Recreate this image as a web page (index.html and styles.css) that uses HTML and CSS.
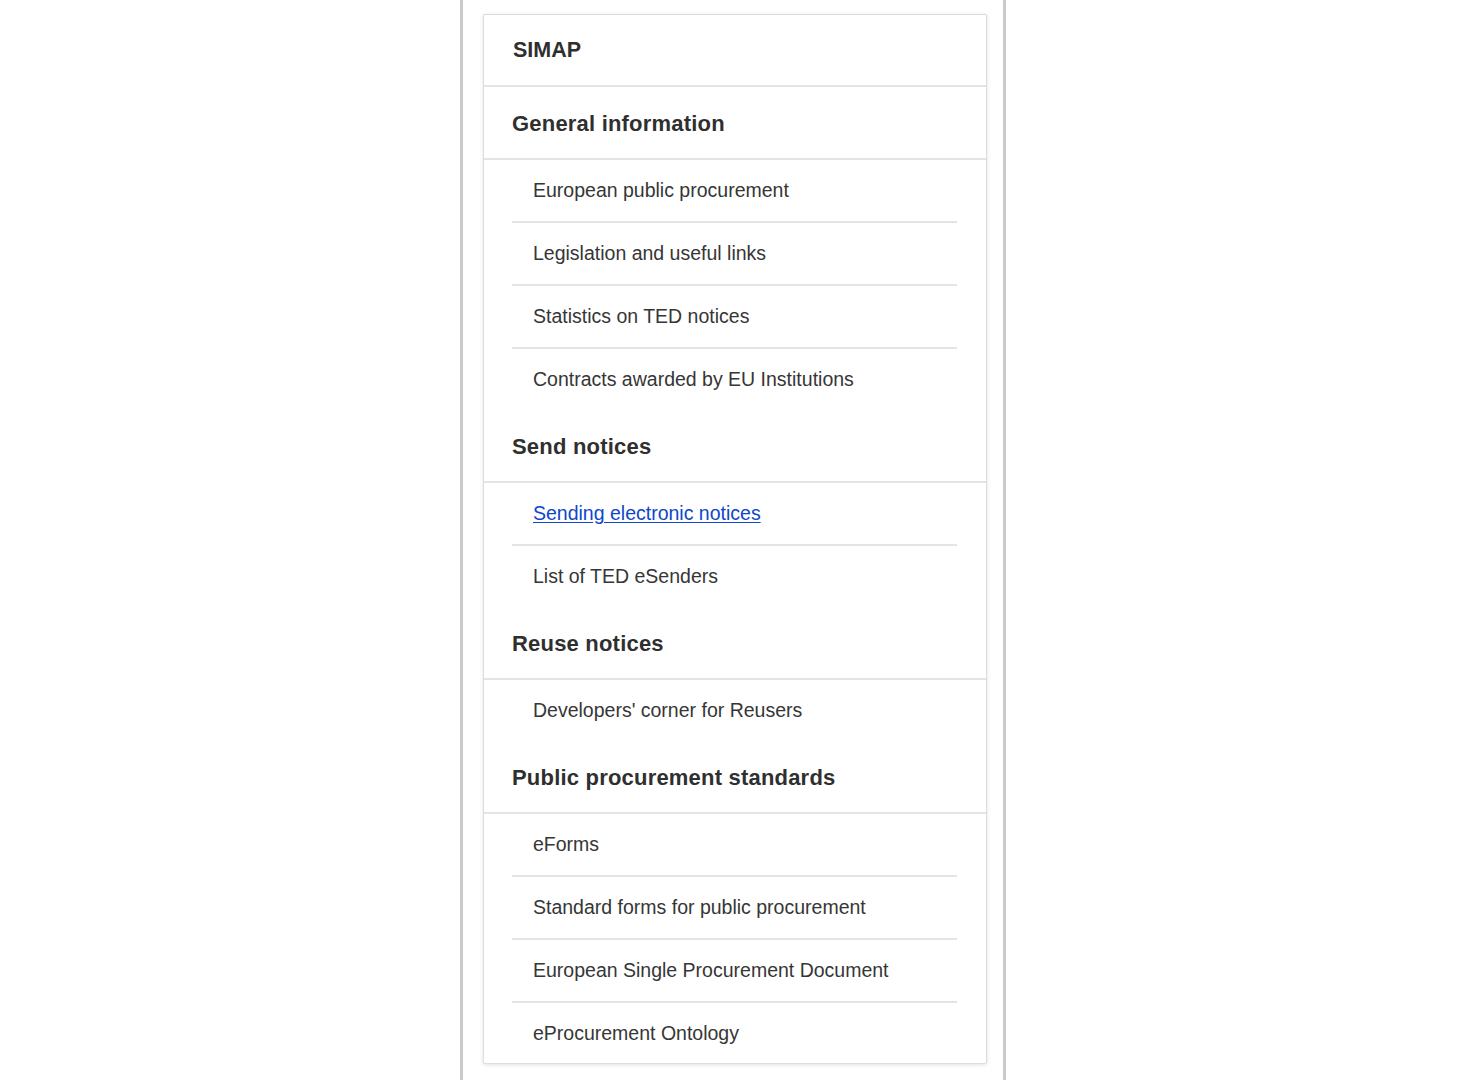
FILE: index.html
```html
<!DOCTYPE html>
<html lang="en">
<head>
<meta charset="utf-8">
<title>SIMAP</title>
<link rel="stylesheet" href="styles.css">
</head>
<body>
<div class="frame">
  <nav class="card">
    <div class="head head-top">SIMAP</div>
    <div class="head">General information</div>
    <ul class="items">
      <li class="item">European public procurement</li>
      <li class="item">Legislation and useful links</li>
      <li class="item">Statistics on TED notices</li>
      <li class="item">Contracts awarded by EU Institutions</li>
    </ul>
    <div class="head">Send notices</div>
    <ul class="items">
      <li class="item"><a class="link" href="#">Sending electronic notices</a></li>
      <li class="item">List of TED eSenders</li>
    </ul>
    <div class="head">Reuse notices</div>
    <ul class="items">
      <li class="item">Developers' corner for Reusers</li>
    </ul>
    <div class="head">Public procurement standards</div>
    <ul class="items items-last">
      <li class="item">eForms</li>
      <li class="item">Standard forms for public procurement</li>
      <li class="item">European Single Procurement Document</li>
      <li class="item">eProcurement Ontology</li>
    </ul>
  </nav>
</div>
</body>
</html>
```
FILE: styles.css
```css
html, body {
  margin: 0;
  padding: 0;
  background: #ffffff;
}
body {
  font-family: "Liberation Sans", Arial, sans-serif;
  color: #333333;
  height: 1080px;
  overflow: hidden;
}
.frame {
  margin-left: 460px;
  width: 546px;
  height: 1080px;
  border-left: 3px solid #cacaca;
  border-right: 3px solid #cacaca;
  padding: 14px 16px 0 20px;
  box-sizing: border-box;
}
.card {
  width: 504px;
  box-sizing: border-box;
  border: 1px solid #dddddd;
  border-radius: 2px;
  box-shadow: 0 1px 4px rgba(0, 0, 0, 0.12);
  background: #fff;
}
.head {
  height: 73px;
  box-sizing: border-box;
  border-bottom: 2px solid #e4e4e4;
  display: flex;
  align-items: center;
  padding-left: 28px;
  padding-top: 2px;
  font-size: 22px;
  font-weight: bold;
  color: #2f2f2f;
  letter-spacing: 0.2px;
}
.head-top {
  height: 72px;
  padding-top: 0;
  padding-left: 29px;
  font-size: 21.5px;
  letter-spacing: 0;
}
.items {
  list-style: none;
  margin: 0;
  padding: 0 29px 0 28px;
}
.item {
  height: 63px;
  box-sizing: border-box;
  border-bottom: 2px solid #e4e4e4;
  display: flex;
  align-items: center;
  padding-left: 21px;
  font-size: 19.5px;
  color: #363636;
}
.item:last-child {
  border-bottom: none;
  height: 61px;
}
.items-last .item:last-child {
  height: 60px;
}
.link {
  color: #0e47cb;
  text-decoration: underline;
  text-underline-offset: 2px;
}
```
